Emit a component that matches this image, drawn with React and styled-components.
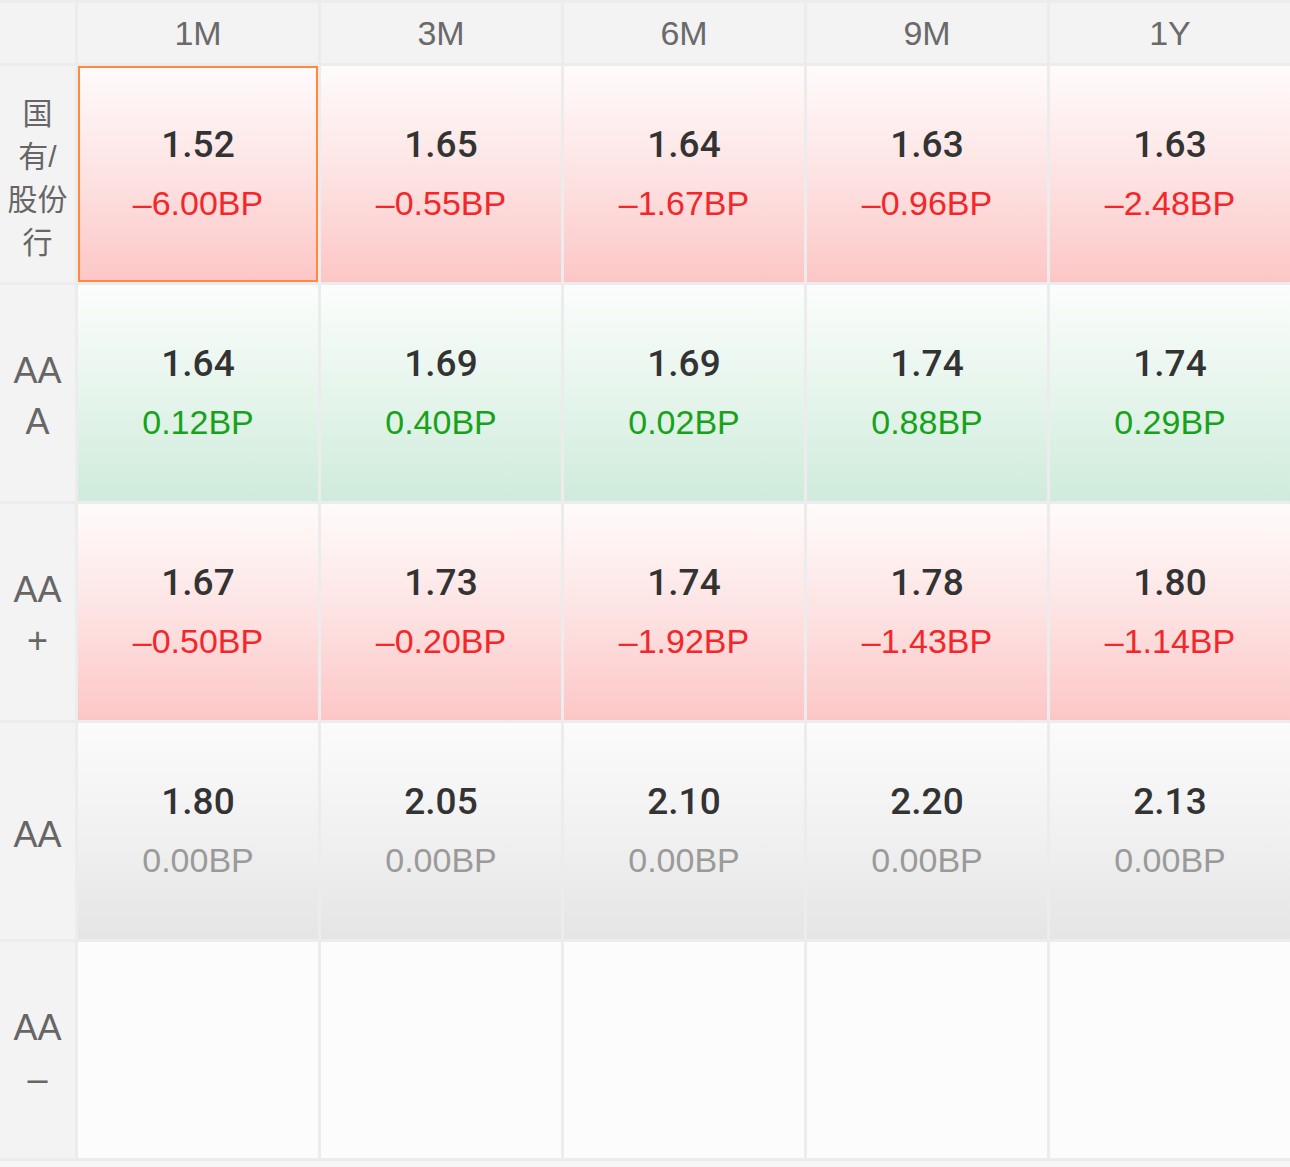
import React from 'react';
import styled, { createGlobalStyle, css } from 'styled-components';

const GlobalStyle = createGlobalStyle`
  html, body {
    margin: 0;
    padding: 0;
    background: #f5f6f7;
  }
  body {
    font-family: "Liberation Sans", "Noto Sans CJK SC", sans-serif;
  }
`;

const tones = {
  down: css`
    background: linear-gradient(to bottom, #fffbfb 0%, #fde3e3 50%, #fdc6c6 100%);
  `,
  up: css`
    background: linear-gradient(to bottom, #fbfdfc 0%, #e6f5ec 50%, #cfebdb 100%);
  `,
  flat: css`
    background: linear-gradient(to bottom, #fbfbfb 0%, #f1f1f1 50%, #e5e5e5 100%);
  `,
  empty: css`
    background: #fcfcfc;
  `,
};

const changeColors = {
  down: '#f3272a',
  up: '#17a21a',
  flat: '#9a9a9a',
};

const Grid = styled.div`
  display: grid;
  grid-template-columns: 75px repeat(5, 1fr);
  grid-template-rows: 60px repeat(5, 216px);
  gap: 3px;
  padding: 3px 0;
  background: #ececec;
`;

const HeadCell = styled.div`
  background: #f3f3f3;
  display: flex;
  align-items: center;
  justify-content: center;
  font-size: 34px;
  color: #6a6a6a;
`;

const RowLabel = styled.div`
  background: #f3f3f3;
  display: flex;
  flex-direction: column;
  align-items: center;
  justify-content: center;
  padding-top: ${p => (p.$cjk ? '8px' : '6px')};
  color: #666;
  font-size: ${p => (p.$cjk ? '30px' : '36px')};
  line-height: ${p => (p.$cjk ? '43px' : '51px')};
`;

const Cell = styled.div`
  box-sizing: border-box;
  display: flex;
  flex-direction: column;
  align-items: center;
  justify-content: center;
  ${p => tones[p.$tone]}
  background-origin: border-box;
  border: ${p => (p.$selected ? '2px solid #ff8a3d' : 'none')};
`;

const Value = styled.div`
  font-family: Roboto, "Liberation Sans", sans-serif;
  font-weight: 500;
  font-size: 37px;
  line-height: 44px;
  color: #333;
  margin-top: -4px;
`;

const Change = styled.div`
  margin-top: 18px;
  font-size: 34px;
  line-height: 36px;
  color: ${p => changeColors[p.$tone]};
`;

const terms = ['1M', '3M', '6M', '9M', '1Y'];

const rows = [
  {
    lines: ['国', '有/', '股份', '行'],
    cjk: true,
    tone: 'down',
    cells: [
      ['1.52', '–6.00BP'],
      ['1.65', '–0.55BP'],
      ['1.64', '–1.67BP'],
      ['1.63', '–0.96BP'],
      ['1.63', '–2.48BP'],
    ],
  },
  {
    lines: ['AA', 'A'],
    tone: 'up',
    cells: [
      ['1.64', '0.12BP'],
      ['1.69', '0.40BP'],
      ['1.69', '0.02BP'],
      ['1.74', '0.88BP'],
      ['1.74', '0.29BP'],
    ],
  },
  {
    lines: ['AA', '+'],
    tone: 'down',
    cells: [
      ['1.67', '–0.50BP'],
      ['1.73', '–0.20BP'],
      ['1.74', '–1.92BP'],
      ['1.78', '–1.43BP'],
      ['1.80', '–1.14BP'],
    ],
  },
  {
    lines: ['AA'],
    tone: 'flat',
    cells: [
      ['1.80', '0.00BP'],
      ['2.05', '0.00BP'],
      ['2.10', '0.00BP'],
      ['2.20', '0.00BP'],
      ['2.13', '0.00BP'],
    ],
  },
  {
    lines: ['AA', '–'],
    tone: 'empty',
    cells: [null, null, null, null, null],
  },
];

export default function App() {
  return (
    <>
      <GlobalStyle />
      <Grid>
        <HeadCell />
        {terms.map(t => (
          <HeadCell key={t}>{t}</HeadCell>
        ))}
        {rows.map((row, r) => (
          <React.Fragment key={r}>
            <RowLabel $cjk={row.cjk}>
              {row.lines.map((l, i) => (
                <span key={i}>{l}</span>
              ))}
            </RowLabel>
            {row.cells.map((c, i) => (
              <Cell key={i} $tone={row.tone} $selected={r === 0 && i === 0}>
                {c && (
                  <>
                    <Value>{c[0]}</Value>
                    <Change $tone={row.tone}>{c[1]}</Change>
                  </>
                )}
              </Cell>
            ))}
          </React.Fragment>
        ))}
      </Grid>
    </>
  );
}
